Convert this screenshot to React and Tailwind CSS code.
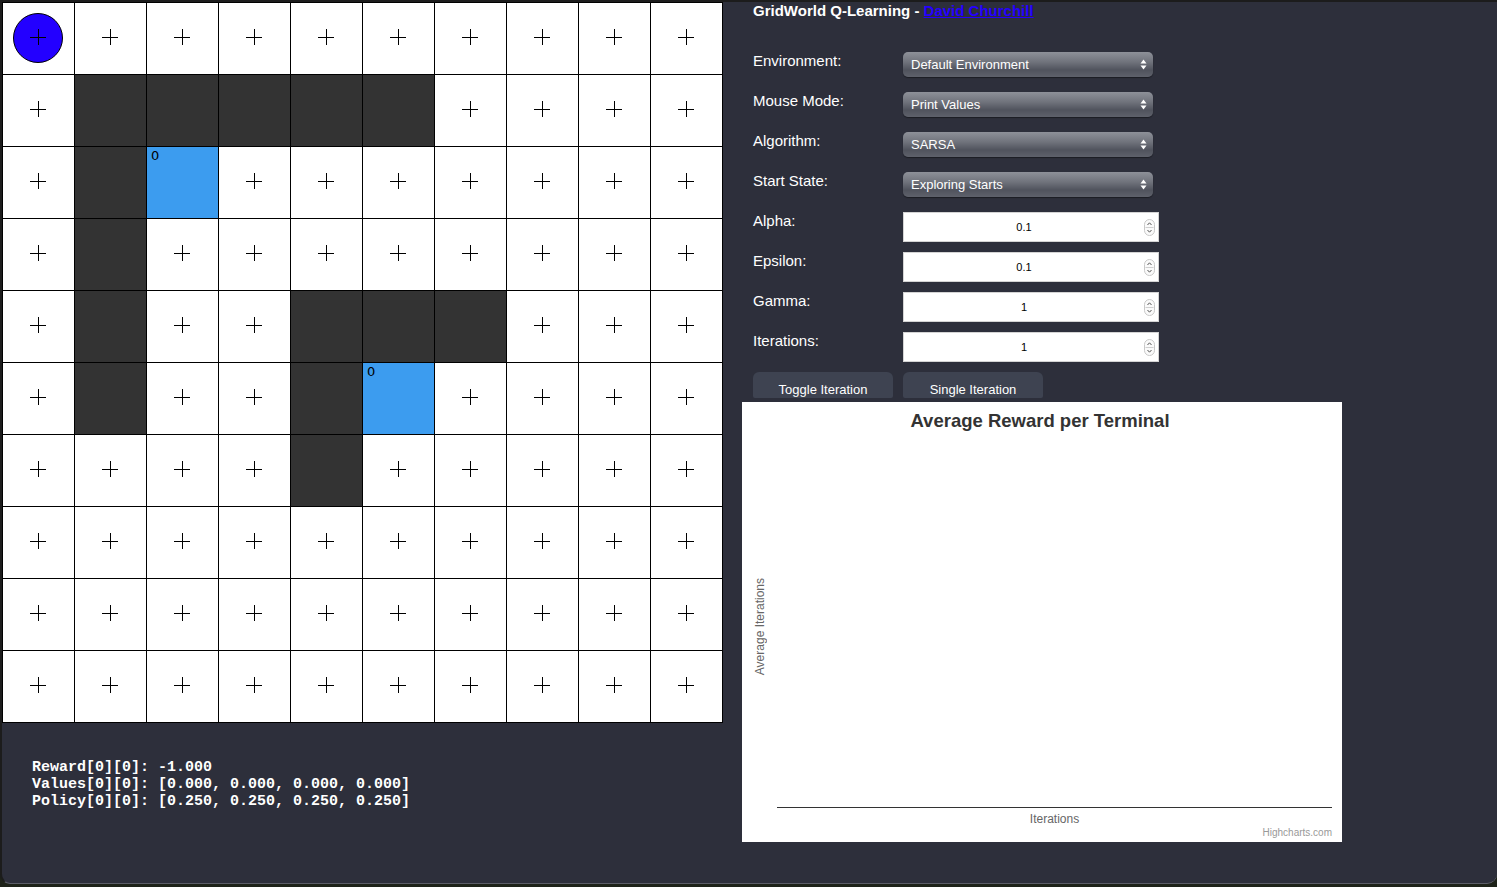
import React from 'react'

const WALLS = new Set([
  '1,1', '1,2', '1,3', '1,4', '1,5',
  '2,1', '3,1',
  '4,1', '4,4', '4,5', '4,6',
  '5,1', '5,4',
  '6,4',
])
const BLUE = new Set(['2,2', '5,5'])

const SELECTS = [
  ['Environment:', 'Default Environment'],
  ['Mouse Mode:', 'Print Values'],
  ['Algorithm:', 'SARSA'],
  ['Start State:', 'Exploring Starts'],
]
const NUMBERS = [
  ['Alpha:', '0.1'],
  ['Epsilon:', '0.1'],
  ['Gamma:', '1'],
  ['Iterations:', '1'],
]

function Cross() {
  return (
    <div className="relative w-4 h-4 -left-px -top-[1.5px]">
      <div className="absolute left-0 right-0 top-1/2 h-px bg-black" />
      <div className="absolute top-0 bottom-0 left-1/2 w-px bg-black" />
    </div>
  )
}

function Cell({ r, c }) {
  const key = `${r},${c}`
  if (WALLS.has(key)) return <div className="bg-[#333333]" />
  if (BLUE.has(key)) {
    return (
      <div className="bg-[#3c9cef] px-[4px] pt-[1px] text-[13px] leading-[16px] text-black font-['DejaVu_Sans',sans-serif]">
        0
      </div>
    )
  }
  return (
    <div className="bg-white flex items-center justify-center relative">
      {r === 0 && c === 0 && (
        <div className="absolute w-[50px] h-[50px] -mt-[2px] -ml-[1px] rounded-full bg-[#2300ff] border-[1.5px] border-black" />
      )}
      <Cross />
    </div>
  )
}

function SelectArrows() {
  return (
    <svg width="7" height="11" viewBox="0 0 7 11" className="text-white">
      <path d="M3.5 0.5 L6.5 4.5 L0.5 4.5 Z" fill="currentColor" />
      <path d="M3.5 10.5 L6.5 6.5 L0.5 6.5 Z" fill="currentColor" />
    </svg>
  )
}

function Spinner() {
  return (
    <svg width="11" height="17" viewBox="0 0 11 17">
      <rect x="0.5" y="0.5" width="10" height="16" rx="5" fill="#fafafa" stroke="#c8c8c8" />
      <line x1="1.5" y1="8.5" x2="9.5" y2="8.5" stroke="#d0d0d0" />
      <path d="M3.5 6 L5.5 3.8 L7.5 6" fill="none" stroke="#555" strokeWidth="1" />
      <path d="M3.5 11 L5.5 13.2 L7.5 11" fill="none" stroke="#555" strokeWidth="1" />
    </svg>
  )
}

export default function App() {
  const rows = Array.from({ length: 10 }, (_, i) => i)

  return (
    <div className="w-[1497px] h-[887px] bg-[#1e2319] font-['Liberation_Sans',Arial,sans-serif] overflow-hidden">
      <div className="h-[884px] bg-[#2d2f3b] border-t-2 border-l-2 border-[#1c1c1c] border-b border-b-[#5c5e68] rounded-b-[10px] flex">
        {/* Left: grid + info */}
        <div className="flex flex-col">
          <div className="grid grid-cols-[repeat(10,71px)] grid-rows-[repeat(10,71px)] gap-px p-px bg-black w-[721px]">
            {rows.map((r) =>
              rows.map((c) => <Cell key={`${r}-${c}`} r={r} c={c} />)
            )}
          </div>
          <pre className="mt-[36px] ml-[30px] text-[15px] leading-[17px] font-bold text-white font-['Liberation_Mono','Courier_New',monospace]">
{`Reward[0][0]: -1.000
Values[0][0]: [0.000, 0.000, 0.000, 0.000]
Policy[0][0]: [0.250, 0.250, 0.250, 0.250]`}
          </pre>
        </div>

        {/* Right: controls + chart */}
        <div className="ml-[19px] flex flex-col">
          <div className="pl-[11px]">
            <h1 className="text-[15px] leading-[18px] font-bold text-white">
              GridWorld Q-Learning -{' '}
              <a href="#" className="text-[#2500ff] underline">David Churchill</a>
            </h1>

            <div className="mt-[32px] flex flex-col">
              {SELECTS.map(([label, value]) => (
                <div key={label} className="h-[40px] flex items-start">
                  <span className="w-[150px] text-[15px] leading-[18px] text-white">{label}</span>
                  <div className="w-[250px] h-[25px] rounded-[5px] bg-[linear-gradient(to_bottom,#8e9199_0%,#70737c_40%,#50535d_72%,#5e616b_100%)] shadow-[0_1px_1px_rgba(0,0,0,0.4)] flex items-center justify-between pl-[8px] pr-[6px]">
                    <span className="text-[13px] text-white leading-none">{value}</span>
                    <SelectArrows />
                  </div>
                </div>
              ))}
              {NUMBERS.map(([label, value]) => (
                <div key={label} className="h-[40px] flex items-start">
                  <span className="w-[150px] text-[15px] leading-[18px] text-white">{label}</span>
                  <div className="w-[256px] h-[30px] bg-white border border-[#d4d4d4] flex items-center pr-[3px]">
                    <span className="flex-1 pt-px text-center text-[11px] text-black">{value}</span>
                    <Spinner />
                  </div>
                </div>
              ))}
            </div>

            <div className="flex gap-[10px]">
              <button className="w-[140px] h-[26px] pt-[9px] leading-[15px] rounded-t-[6px] rounded-b-[2px] bg-[#3e4351] text-[13px] text-white overflow-hidden">
                Toggle Iteration
              </button>
              <button className="w-[140px] h-[26px] pt-[9px] leading-[15px] rounded-t-[6px] rounded-b-[2px] bg-[#3e4351] text-[13px] text-white overflow-hidden">
                Single Iteration
              </button>
            </div>
          </div>

          {/* Chart */}
          <div className="mt-[4px] w-[600px] h-[440px] bg-white flex flex-col">
            <div className="pt-[8px] pr-[4px] text-center text-[18.5px] leading-[22px] font-bold text-[#333333]">
              Average Reward per Terminal
            </div>
            <div className="flex-1 flex mt-[13px]">
              <div className="w-[35px] flex items-center justify-center">
                <span className="[writing-mode:vertical-rl] rotate-180 text-[12px] text-[#666666]">
                  Average Iterations
                </span>
              </div>
              <div className="flex-1 mr-[10px] border-b border-[#333333]" />
            </div>
            <div className="pl-[35px] pr-[10px] pt-[3px] text-center text-[12px] leading-[16px] text-[#666666]">
              Iterations
            </div>
            <div className="pr-[10px] pb-[3px] text-right text-[10px] leading-[12px] text-[#999999]">
              Highcharts.com
            </div>
          </div>
        </div>
      </div>
    </div>
  )
}
